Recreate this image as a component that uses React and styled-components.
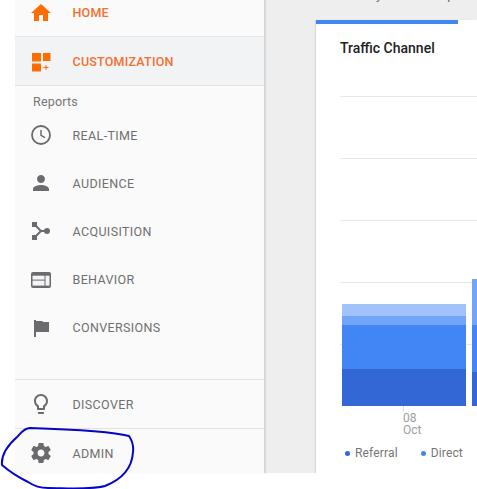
import React from "react";
import styled, { createGlobalStyle } from "styled-components";

const Global = createGlobalStyle`
  html, body { margin: 0; padding: 0; background: #fff; }
  body { font-family: Roboto, "Liberation Sans", sans-serif; }
`;

const Page = styled.div`
  position: relative;
  width: 477px;
  height: 489px;
  overflow: hidden;
  background: #fff;
`;
const Frame = styled.div`
  display: flex;
  height: 473px;
  padding-left: 15px;
  box-sizing: border-box;
`;
const Sidebar = styled.nav`
  width: 249px;
  flex: none;
  display: flex;
  flex-direction: column;
  overflow: hidden;
  background: #fafafa;
  border-right: 1px solid #d4d4d4;
  box-shadow: 1px 0 1px #dcdcdc;
  z-index: 1;
`;
const Row = styled.div`
  display: flex;
  align-items: center;
  gap: 19.5px;
  flex: none;
  box-sizing: border-box;
  height: ${(p) => p.$h || 48}px;
  padding: 0 0 ${(p) => p.$pb || 0}px 14px;
  background: ${(p) => (p.$active ? "#f2f3f5" : "transparent")};
  border-bottom: ${(p) => (p.$line ? "1px solid #e3e3e3" : "none")};
  border-top: ${(p) => (p.$topLine ? "1px solid #e3e3e3" : "none")};
`;
const Label = styled.span`
  font-size: 12.5px;
  font-weight: ${(p) => (p.$on ? 500 : 400)};
  letter-spacing: ${(p) => (p.$on ? 0.22 : 0.36)}px;
  color: ${(p) => (p.$on ? "#f4702c" : "#707070")};
  white-space: nowrap;
`;
const Heading = styled.div`
  flex: none;
  height: 15px;
  padding: 8px 0 2px 18px;
  font-size: 12.5px;
  line-height: 15px;
  letter-spacing: 0.2px;
  color: #757575;
`;
const Bottom = styled.div`
  margin-top: 28px;
`;
const Icon = styled.svg`
  width: 24px;
  height: 24px;
  flex: none;
  display: block;
  color: ${(p) => (p.$on ? "#ff6d00" : "#6b6b6f")};
`;
const Main = styled.main`
  flex: 1;
  min-width: 0;
  background: #eeeeee;
  overflow: hidden;
`;
const Crumb = styled.div`
  display: flex;
  height: 20px;
  margin-left: 58px;
  gap: 31px;
  font-size: 13px;
  line-height: 16px;
  color: #666;
  white-space: nowrap;
  transform: translateY(-13px);
`;
const Card = styled.section`
  margin-left: 51px;
  height: 453px;
  background: #fff;
  box-shadow: -1px 0 1px #d8d8d8;
  overflow: hidden;
`;
const Accent = styled.div`
  width: 142px;
  height: 4px;
  background: #4285f4;
`;
const Title = styled.h2`
  margin: 16px 0 0 24px;
  font-size: 14px;
  line-height: 17px;
  font-weight: 500;
  color: #212121;
  white-space: nowrap;
`;
const Chart = styled.svg`
  display: block;
  margin: 39px 0 0 24px;
  width: 137px;
  height: 315px;
`;
const Tick = styled.div`
  margin: 1px 0 0 87px;
  font-size: 12px;
  line-height: 12px;
  color: #9e9e9e;
`;
const Legend = styled.div`
  display: flex;
  gap: 23px;
  margin: 10px 0 0 29px;
  font-size: 12px;
  line-height: 15px;
  letter-spacing: 0.15px;
  color: #757575;
`;
const LegendItem = styled.span`
  display: flex;
  align-items: center;
  gap: 5px;
  white-space: nowrap;
`;
const Dot = styled.i`
  width: 5px;
  height: 5px;
  border-radius: 50%;
  background: ${(p) => p.$c};
`;
const Ink = styled.svg`
  position: absolute;
  inset: 0;
  width: 477px;
  height: 489px;
  z-index: 2;
  pointer-events: none;
`;

const I = ({ on, children }) => (
  <Icon $on={on} viewBox="0 0 24 24" fill="currentColor">
    {children}
  </Icon>
);

const icons = {
  home: <path d="M10 20v-6h4v6h5v-8h3L12 3 2 12h3v8z" />,
  custom: (
    <>
      <rect x="3" y="4" width="9" height="8.5" />
      <rect x="14" y="4" width="7.5" height="8" />
      <rect x="3" y="14.5" width="9" height="8" />
      <path d="M16.5 16h1v2h2v1h-2v2h-1v-2h-2v-1h2z" />
    </>
  ),
  clock: (
    <>
      <circle cx="12" cy="12" r="9" fill="none" stroke="currentColor" strokeWidth="1.8" />
      <path d="M12 7v5.3l4 2.4" fill="none" stroke="currentColor" strokeWidth="1.5" />
    </>
  ),
  person: (
    <path d="M12 12c2.21 0 4-1.79 4-4s-1.79-4-4-4-4 1.79-4 4 1.79 4 4 4zm0 2c-2.67 0-8 1.34-8 4v2h16v-2c0-2.66-5.33-4-8-4z" />
  ),
  acq: (
    <>
      <rect x="3" y="3" width="5" height="5" />
      <rect x="3" y="16" width="5" height="5" />
      <circle cx="18" cy="12" r="3" />
      <path d="M6 6l6 6-6 6M12 12h6" fill="none" stroke="currentColor" strokeWidth="2" />
    </>
  ),
  behavior: (
    <>
      <rect x="2" y="5" width="20" height="16" rx="2" />
      <rect x="3.5" y="8.7" width="12" height="3.9" fill="#f4f4f4" />
      <rect x="3.5" y="13.6" width="12" height="5" fill="#f4f4f4" />
      <rect x="16.5" y="8.7" width="4" height="9.9" fill="#f4f4f4" />
    </>
  ),
  flag: (
    <>
      <rect x="5" y="5" width="2" height="17" />
      <path d="M7 6h6.5l.5 1h6v10H7z" />
    </>
  ),
  bulb: (
    <path d="M9 21c0 .55.45 1 1 1h4c.55 0 1-.45 1-1v-1H9v1zm3-19C8.14 2 5 5.14 5 9c0 2.38 1.19 4.47 3 5.74V17c0 .55.45 1 1 1h6c.55 0 1-.45 1-1v-2.26c1.81-1.27 3-3.36 3-5.74 0-3.86-3.14-7-7-7zm2.85 11.1l-.85.6V16h-4v-2.3l-.85-.6C7.8 12.16 7 10.63 7 9c0-2.76 2.24-5 5-5s5 2.24 5 5c0 1.63-.8 3.16-2.15 4.1z" />
  ),
  gear: (
    <path d="M19.43 12.98c.04-.32.07-.64.07-.98s-.03-.66-.07-.98l2.11-1.65c.19-.15.24-.42.12-.64l-2-3.46c-.12-.22-.39-.3-.61-.22l-2.49 1c-.52-.4-1.08-.73-1.69-.98l-.38-2.65C14.46 2.18 14.25 2 14 2h-4c-.25 0-.46.18-.49.42l-.38 2.65c-.61.25-1.17.59-1.69.98l-2.49-1c-.23-.09-.49 0-.61.22l-2 3.46c-.13.22-.07.49.12.64l2.11 1.65c-.04.32-.07.65-.07.98s.03.66.07.98l-2.11 1.65c-.19.15-.24.42-.12.64l2 3.46c.12.22.39.3.61.22l2.49-1c.52.4 1.08.73 1.69.98l.38 2.65c.03.24.24.42.49.42h4c.25 0 .46-.18.49-.42l.38-2.65c.61-.25 1.17-.59 1.69-.98l2.49 1c.23.09.49 0 .61-.22l2-3.46c.12-.22.07-.49-.12-.64l-2.11-1.65zM12 15.5c-1.93 0-3.5-1.57-3.5-3.5s1.57-3.5 3.5-3.5 3.5 1.57 3.5 3.5-1.57 3.5-3.5 3.5z" />
  ),
};

const reports = [
  ["clock", "REAL-TIME"],
  ["person", "AUDIENCE"],
  ["acq", "ACQUISITION"],
  ["behavior", "BEHAVIOR"],
  ["flag", "CONVERSIONS"],
];

export default function App() {
  return (
    <Page>
      <Global />
      <Frame>
        <Sidebar>
          <Row $h={37} $pb={11} $line>
            <I on>{icons.home}</I>
            <Label $on>HOME</Label>
          </Row>
          <Row $active $line $h={49}>
            <I on>{icons.custom}</I>
            <Label $on>CUSTOMIZATION</Label>
          </Row>
          <Heading>Reports</Heading>
          {reports.map(([k, t]) => (
            <Row key={t}>
              <I>{icons[k]}</I>
              <Label>{t}</Label>
            </Row>
          ))}
          <Bottom>
            <Row $topLine $line $h={50}>
              <I>{icons.bulb}</I>
              <Label>DISCOVER</Label>
            </Row>
            <Row>
              <I>{icons.gear}</I>
              <Label>ADMIN</Label>
            </Row>
          </Bottom>
        </Sidebar>
        <Main>
          <Crumb>
            <span>Last 7 days</span>
            <span>Compare</span>
          </Crumb>
          <Card>
            <Accent />
            <Title>Traffic Channel</Title>
            <Chart viewBox="0 0 137 315">
              {[0.5, 62.5, 124.5, 186.5, 248.5].map((y) => (
                <line key={y} x1="0" x2="137" y1={y} y2={y} stroke="#e8e8e8" />
              ))}
              <rect x="2" y="208" width="124" height="12" fill="#a1c2fa" />
              <rect x="2" y="220" width="124" height="9" fill="#72a4f7" />
              <rect x="2" y="229" width="124" height="44" fill="#4285f4" />
              <rect x="2" y="273" width="124" height="37" fill="#3367d6" />
              <rect x="132" y="183" width="5" height="46" fill="#72a4f7" />
              <rect x="132" y="229" width="5" height="47" fill="#4285f4" />
              <rect x="132" y="276" width="5" height="34" fill="#3367d6" />
              <line x1="63.5" x2="63.5" y1="310" y2="315" stroke="#ddd" />
            </Chart>
            <Tick>
              08
              <br />
              Oct
            </Tick>
            <Legend>
              <LegendItem>
                <Dot $c="#3367d6" />
                Referral
              </LegendItem>
              <LegendItem>
                <Dot $c="#4285f4" />
                Direct
              </LegendItem>
            </Legend>
          </Card>
        </Main>
      </Frame>
      <Ink viewBox="0 0 477 489" fill="none">
        <path
          d="M129 436C110 431 60 429 30 428C24 428 20 434 17 437C8 445 1 455 2 465C10 472 20 478 28 482C34 486 40 488 48 488C65 488 90 490 105 486C120 480 132 470 133 452C134 444 131 439 129 436Z"
          stroke="#0505c8"
          strokeWidth="2"
          strokeLinejoin="round"
        />
      </Ink>
    </Page>
  );
}
